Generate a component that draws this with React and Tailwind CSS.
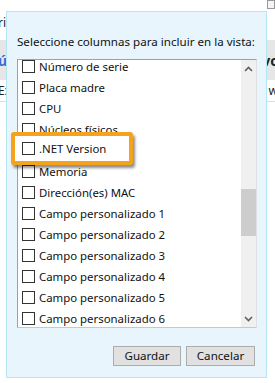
import React from "react";

const items = [
  "Número de serie",
  "Placa madre",
  "CPU",
  "Núcleos físicos",
  ".NET Version",
  "Memoria",
  "Dirección(es) MAC",
  "Campo personalizado 1",
  "Campo personalizado 2",
  "Campo personalizado 3",
  "Campo personalizado 4",
  "Campo personalizado 5",
  "Campo personalizado 6",
];

function Row({ label }) {
  return (
    <div className="flex h-[21px] items-center gap-[4px] pl-[4px]">
      <div className="h-[13px] w-[13px] shrink-0 border border-[#333333] bg-white" />
      <span className="whitespace-nowrap text-[11.4px] leading-[16px] text-[#111111]">{label}</span>
    </div>
  );
}

export default function App() {
  return (
    <div
      className="relative h-[383px] w-[275px] overflow-hidden bg-white"
      style={{ fontFamily: '"Noto Sans", "Open Sans", sans-serif' }}
    >
      {/* background app */}
      <div className="flex flex-col">
        <div className="flex h-[40px] items-start justify-between pt-[14px] text-[12px] text-[#222]">
          <span className="-ml-[2px]">rif</span>
          <div className="mt-[-14px] h-[9px] w-[8px] border border-[#999] bg-[#f4f4f4]" />
        </div>
        <div className="flex h-[40px] items-center justify-between bg-[#e6e6e6] text-[14px] font-bold">
          <span className="-ml-[2px] text-[#3a6fd0]">úl</span>
          <span className="-mr-[4px] text-[#222]">vo</span>
        </div>
        <div className="flex h-[22px] items-center justify-between border-b border-[#dddddd] text-[12px] text-[#222]">
          <span className="-ml-[2px]">Ex</span>
          <span className="-mr-[3px]">w</span>
        </div>
      </div>

      {/* dialog window */}
      <div className="absolute left-[6px] top-[11px] flex h-[367px] w-[261px] flex-col border border-[#b6e6f3] bg-[#e8f5fc] px-[10px] pt-[22px]">
        <div className="whitespace-nowrap text-[11.6px] leading-[16px] text-[#111111]">
          Seleccione columnas para incluir en la vista:
        </div>
        <div className="relative mt-[9px] flex h-[269px] w-[240px] overflow-hidden border border-[#a0a0a0] border-b-[#c8c8c8] border-r-[#e0e0e0] bg-white">
          <div className="relative flex-1 overflow-hidden">
            <div className="-mt-[4px] flex flex-col">
              {items.map((it) => (
                <Row key={it} label={it} />
              ))}
            </div>
          </div>
          <div className="relative flex w-[15px] shrink-0 flex-col bg-[#f0f0f0]">
            <div className="flex h-[17px] items-center justify-center">
              <svg width="9" height="6" viewBox="0 0 9 6">
                <path d="M1 5 L4.5 1.5 L8 5" fill="none" stroke="#606060" strokeWidth="1.6" />
              </svg>
            </div>
            <div className="mt-[112px] h-[47px] bg-[#cdcdcd]" />
            <div className="flex-1" />
            <div className="flex h-[17px] items-center justify-center">
              <svg width="9" height="6" viewBox="0 0 9 6">
                <path d="M1 1 L4.5 4.5 L8 1" fill="none" stroke="#606060" strokeWidth="1.6" />
              </svg>
            </div>
          </div>
        </div>
        <div className="mt-[18px] flex justify-end gap-[5px] pr-[1px]">
          <button className="h-[20px] w-[68px] border border-[#adadad] bg-[#e1e1e1] text-[11.6px] leading-[16px] text-[#111]">
            Guardar
          </button>
          <button className="h-[20px] w-[69px] border border-[#adadad] bg-[#e1e1e1] text-[11.6px] leading-[16px] text-[#111]">
            Cancelar
          </button>
        </div>
      </div>

      {/* orange highlight callout */}
      <div className="absolute left-[11px] top-[132px] h-[33px] w-[122px] rounded-[3px] border-4 border-[#f5a21c] bg-white shadow-[2px_3px_3px_rgba(0,0,0,0.45)]">
        <div className="flex h-full items-center gap-[4px] pl-[7px]">
          <div className="h-[13px] w-[13px] shrink-0 border border-[#333333] bg-white" />
          <span className="whitespace-nowrap text-[11.4px] leading-[16px] text-[#111111]">.NET Version</span>
        </div>
      </div>
    </div>
  );
}
